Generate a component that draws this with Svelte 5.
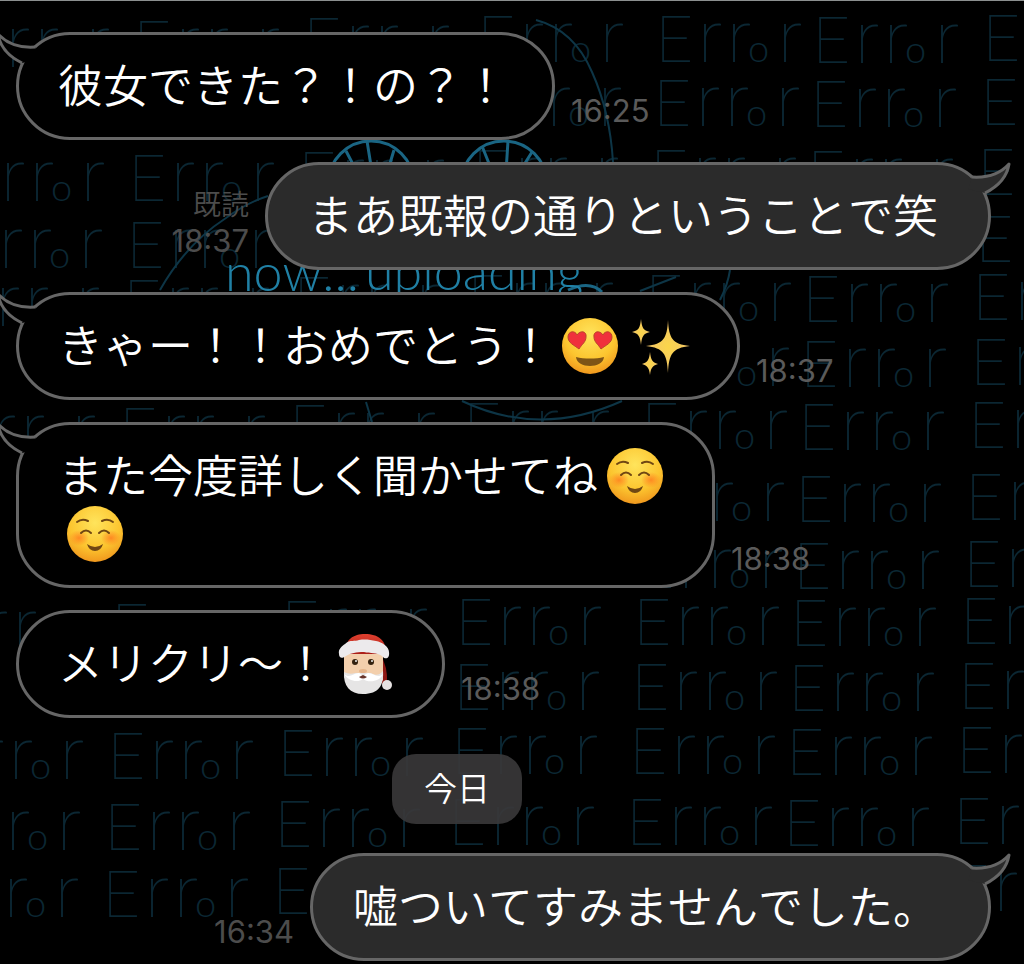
<script>
  const messages = [
    { from: 'them', tail: true, lines: [['彼女できた？！の？！']], time: '16:25' },
    { from: 'me', tail: true, lines: [['まあ既報の通りということで笑']], time: '18:37', read: true },
    { from: 'them', tail: true, lines: [['きゃー！！おめでとう！', 'hearts', 'sparkles']], time: '18:37' },
    { from: 'them', tail: true, lines: [['また今度詳しく聞かせてね', 'smile'], ['smile']], time: '18:38' },
    { from: 'them', tail: false, lines: [['メリクリ～！', 'santa']], time: '18:38' },
    { date: '今日' },
    { from: 'me', tail: true, lines: [['嘘ついてすみませんでした。']], time: '16:34' }
  ];

  const emojiNames = {
    hearts: '😍',
    sparkles: '✨',
    smile: '☺️',
    santa: '🎅🏻'
  };

  // Wallpaper: every row drifts a little to the left.
  // Words from skip[0] to skip[1] sit behind a bubble and are left out.
  const rows = [
    { top: 15 },
    { top: 79, skip: [0, 2] },
    { top: 149 },
    { top: 216, skip: [2, 5] },
    { top: 274 },
    { top: 339, skip: [0, 3] },
    { top: 402 },
    { top: 474, skip: [0, 3] },
    { top: 541, skip: [0, 3] },
    { top: 598 },
    { top: 663, skip: [0, 2] },
    { top: 727 },
    { top: 798 },
    { top: 865, skip: [3, 5] }
  ];

  const columns = [
    { x: -1019, y: 6 },
    { x: -849, y: 6 },
    { x: -679, y: 3 },
    { x: -505, y: 1 },
    { x: -327, y: 1 },
    { x: -170, y: 2 },
    { x: 0, y: 0 }
  ];

  const words = rows.flatMap(({ top, skip }, row) =>
    columns
      .filter((_, i) => !skip || i < skip[0] || i > skip[1])
      .map((col) => ({
        x: Math.round(988 - row * 2.4 + col.x),
        y: top + col.y + 46
      }))
  );
</script>

{#snippet emoji(name)}
  <svg class="emoji" viewBox="0 0 57 60" role="img" aria-label={emojiNames[name]}>
    {#if name === 'hearts'}
      <circle cx="28" cy="30" r="28" fill="url(#face)" />
      <path d="M17 33 C12 29 6 27 6 21 C6 15 13 14 15 19 C18 14 25 15 24 21 C24 26 20 28 17 33 Z" fill="#f0303c" stroke="#b9462a" stroke-width="1" />
      <path d="M39 33 C36 28 32 26 32 21 C31 15 38 14 41 19 C43 14 50 15 50 21 C50 27 44 29 39 33 Z" fill="#f0303c" stroke="#b9462a" stroke-width="1" />
      <path d="M14 41 C22 43 34 43 42 41 C41 53 15 53 14 41 Z" fill="#7d5416" />
    {:else if name === 'sparkles'}
      <g fill="url(#gold)">
        <path d="M36 4 C37 22 40 28 58 30 C40 32 37 38 36 57 C35 38 32 32 14 30 C32 28 35 22 36 4 Z" />
        <path d="M9 3 C10 12 11 14 18 16 C11 18 10 20 9 29 C8 20 7 18 0 16 C7 14 8 12 9 3 Z" />
        <path d="M18 36 C19 44 20 46 26 48 C20 50 19 52 18 59 C17 52 16 50 10 48 C16 46 17 44 18 36 Z" />
      </g>
    {:else if name === 'smile'}
      <circle cx="28" cy="30" r="28" fill="url(#face)" />
      <ellipse cx="12" cy="34" rx="10" ry="8" fill="url(#blush)" />
      <ellipse cx="44" cy="34" rx="10" ry="8" fill="url(#blush)" />
      <g fill="none" stroke="#704713" stroke-width="2" stroke-linecap="round">
        <path d="M10 18 Q15 14 21 17" />
        <path d="M35 17 Q41 14 46 18" />
        <path d="M14 29 Q19 24 24 29" />
        <path d="M32 29 Q37 24 42 29" />
      </g>
      <path d="M20 40 Q28 46 36 40 Q34 47 28 47 Q22 47 20 40 Z" fill="#704713" />
    {:else}
      <path d="M43 20 Q51 32 50 50 L45 50 Z" fill="#8e1713" />
      <path d="M8 21 C7 5 17 0 28 0 C41 0 50 6 49 21 Z" fill="url(#hat)" />
      <path d="M7 20 H46 V46 Q36 56 26 56 Q14 56 7 42 Z" fill="#f3cfac" />
      <path d="M7 38 C11 40 15 40 18 39 L34 39 C39 42 43 41 46 37 C47 51 42 60 26 60 C13 60 6 52 7 38 Z" fill="#e6e5e5" />
      <path d="M7 40 C13 45 16 39 22 39 Q25 40 26 43 Q28 40 31 39 C37 39 40 45 46 40 C43 48 31 49 26 45 C21 49 11 47 7 40 Z" fill="#fff" />
      <path d="M22 43 Q26 46 30 43 L26 41 Z" fill="#67342a" />
      <ellipse cx="26" cy="37" rx="4" ry="2" fill="#e5b48a" />
      <circle cx="18" cy="28" r="3" fill="#33210f" />
      <circle cx="34" cy="28" r="3" fill="#33210f" />
      <circle cx="19" cy="27" r="1" fill="#eee" />
      <circle cx="35" cy="27" r="1" fill="#eee" />
      <path d="M2 20 C1 15 5 12 8 10 C13 5 18 8 22 6 C29 5 33 6 39 7 C45 8 52 13 52 18 C53 25 48 26 45 22 C39 18 34 20 27 18 C19 18 14 19 9 22 C5 25 2 24 2 20 Z" fill="#eceaec" />
      <circle cx="50" cy="51" r="5" fill="#e6e2e2" />
    {/if}
  </svg>
{/snippet}

<main class="chat">
  <svg class="wallpaper" viewBox="0 0 1024 964" preserveAspectRatio="xMidYMin slice" aria-hidden="true">
    <defs>
      <radialGradient id="face" cx="0.5" cy="0.3" r="0.75">
        <stop offset="0" stop-color="#ffe45c" />
        <stop offset="0.6" stop-color="#fcc52f" />
        <stop offset="1" stop-color="#ee8f1a" />
      </radialGradient>
      <radialGradient id="blush">
        <stop offset="0" stop-color="#ff7a1e" stop-opacity="0.8" />
        <stop offset="1" stop-color="#ff7a1e" stop-opacity="0" />
      </radialGradient>
      <radialGradient id="gold">
        <stop offset="0" stop-color="#fbd64a" />
        <stop offset="1" stop-color="#f2c46a" />
      </radialGradient>
      <linearGradient id="hat" x1="0" y1="0" x2="0" y2="1">
        <stop offset="0" stop-color="#e0402f" />
        <stop offset="1" stop-color="#a81d17" />
      </linearGradient>
    </defs>

    <g class="errors">
      {#each words as word}
        <text y={word.y}>
          <tspan x={word.x - 5}>E</tspan><tspan x={word.x + 37} class="stem">r</tspan><tspan x={word.x + 66} class="stem">r</tspan><tspan x={word.x + 87} class="small">o</tspan><tspan x={word.x + 117} class="stem">r</tspan>
        </text>
      {/each}
    </g>

    <g class="sketch">
      <path d="M536 20 Q574 30 592 72 Q610 112 613 162" />
      <path d="M462 401 Q540 438 622 401" />
      <path d="M160 290 Q186 244 226 218 Q246 203 268 196" />
      <path d="M366 402 L372 422" />
      <path d="M640 291 L676 277 M730 270 Q728 284 720 300" />
    </g>
    <g class="sketch bright">
      <circle cx="371" cy="184" r="43" />
      <circle cx="504" cy="184" r="43" />
      <path d="M367 141 L372 172 M394 150 L388 170 M346 151 L356 170" />
      <path d="M508 141 L506 172 M532 152 L522 168 M482 146 L490 166" />
      <path d="M568 290 Q590 280 602 292" />
    </g>
    <g class="uploading">
      <text x="225" y="291">now...</text>
      <text x="365" y="290">uploading</text>
    </g>
  </svg>

  {#each messages as msg}
    {#if msg.date}
      <div class="date"><span>{msg.date}</span></div>
    {:else}
      <div class="row {msg.from}">
        <p class="bubble">
          {#if msg.tail}
            <svg class="tail" viewBox="0 0 60 50" aria-hidden="true">
              <path class="tail-fill" d="M21 15 C36 16 49 12 58 2 C56 15 46 25 34 31 L17 27 Z" />
              <path class="tail-line" d="M21 15 C36 16 49 12 58 2 C56 15 46 25 34 31" />
            </svg>
          {/if}
          {#each msg.lines as line}
            <span class="line">
              {#each line as part}{#if emojiNames[part]}{@render emoji(part)}{:else}{part}{/if}{/each}
            </span>
          {/each}
        </p>
        <div class="meta">
          {#if msg.read}<span>既読</span>{/if}
          <time>{msg.time}</time>
        </div>
      </div>
    {/if}
  {/each}
</main>

<style>
  :global(body) {
    background: #000;
  }

  .chat {
    position: relative;
    z-index: 0;
    display: flex;
    flex-direction: column;
    gap: 22px;
    box-sizing: border-box;
    min-height: 100vh;
    padding: 31px 33px 3px 16px;
    border-top: 1px solid #8b8f8f;
    overflow: hidden;
    background: #000;
    color: #fff;
    font-family: 'Noto Sans CJK JP', sans-serif;
    font-weight: 350;
    font-kerning: none;
    text-spacing-trim: space-all;
  }

  .wallpaper {
    position: absolute;
    top: -1px;
    left: 0;
    z-index: -1;
    width: 100%;
    height: 100%;
  }

  .errors {
    fill: #0b2733;
    font-family: Roboto, sans-serif;
    font-size: 64px;
    font-weight: 100;
  }

  .errors .stem {
    font-size: 72px;
  }

  .errors .small {
    font-family: Lato, sans-serif;
    font-size: 38px;
    font-weight: 300;
  }

  .sketch {
    fill: none;
    stroke: #0d3546;
    stroke-width: 2;
  }

  .sketch.bright {
    stroke: #1a6583;
    stroke-width: 3;
  }

  .uploading {
    fill: #2080a5;
    font-family: Lato, sans-serif;
    font-size: 52px;
    font-weight: 300;
  }

  .row {
    display: flex;
    align-items: flex-end;
    gap: 16px;
  }

  .row.me {
    flex-direction: row-reverse;
  }

  .bubble {
    position: relative;
    margin: 0;
    padding: 20px 44px 24px 39px;
    border: 3px solid #666;
    border-radius: 54px;
    background: #000;
    font-size: 45px;
    line-height: 58px;
  }

  .me .bubble {
    padding: 20px 50px 24px 40px;
    background: #2b2b2b;
  }

  .line {
    display: flex;
    align-items: center;
    height: 58px;
    white-space: nowrap;
  }

  .emoji {
    flex: none;
    width: 57px;
    height: 60px;
    margin: 4px 4px 0 9px;
    overflow: visible;
  }

  .tail {
    position: absolute;
    top: -3px;
    right: -23px;
    width: 60px;
    height: 50px;
  }

  .them .tail {
    right: auto;
    left: -23px;
    transform: scaleX(-1);
  }

  .tail-fill {
    fill: #000;
  }

  .me .tail-fill {
    fill: #2b2b2b;
  }

  .tail-line {
    fill: none;
    stroke: #666;
    stroke-width: 3;
    stroke-linejoin: round;
  }

  .meta {
    display: flex;
    flex-direction: column;
    align-items: flex-end;
    gap: 2px;
    padding-bottom: 12px;
    color: #5a5a5a;
    font-size: 28px;
    line-height: 35px;
  }

  time {
    font-family: Inter, sans-serif;
    font-size: 31px;
    font-weight: 400;
  }

  .me .meta {
    color: #4c4c4c;
  }

  .date {
    display: flex;
    justify-content: center;
    padding: 14px 93px 7px 0;
  }

  .date span {
    padding: 0 32px 4px;
    border-radius: 24px;
    background: rgba(58, 57, 58, 0.9);
    font-size: 33px;
    line-height: 66px;
  }
</style>
